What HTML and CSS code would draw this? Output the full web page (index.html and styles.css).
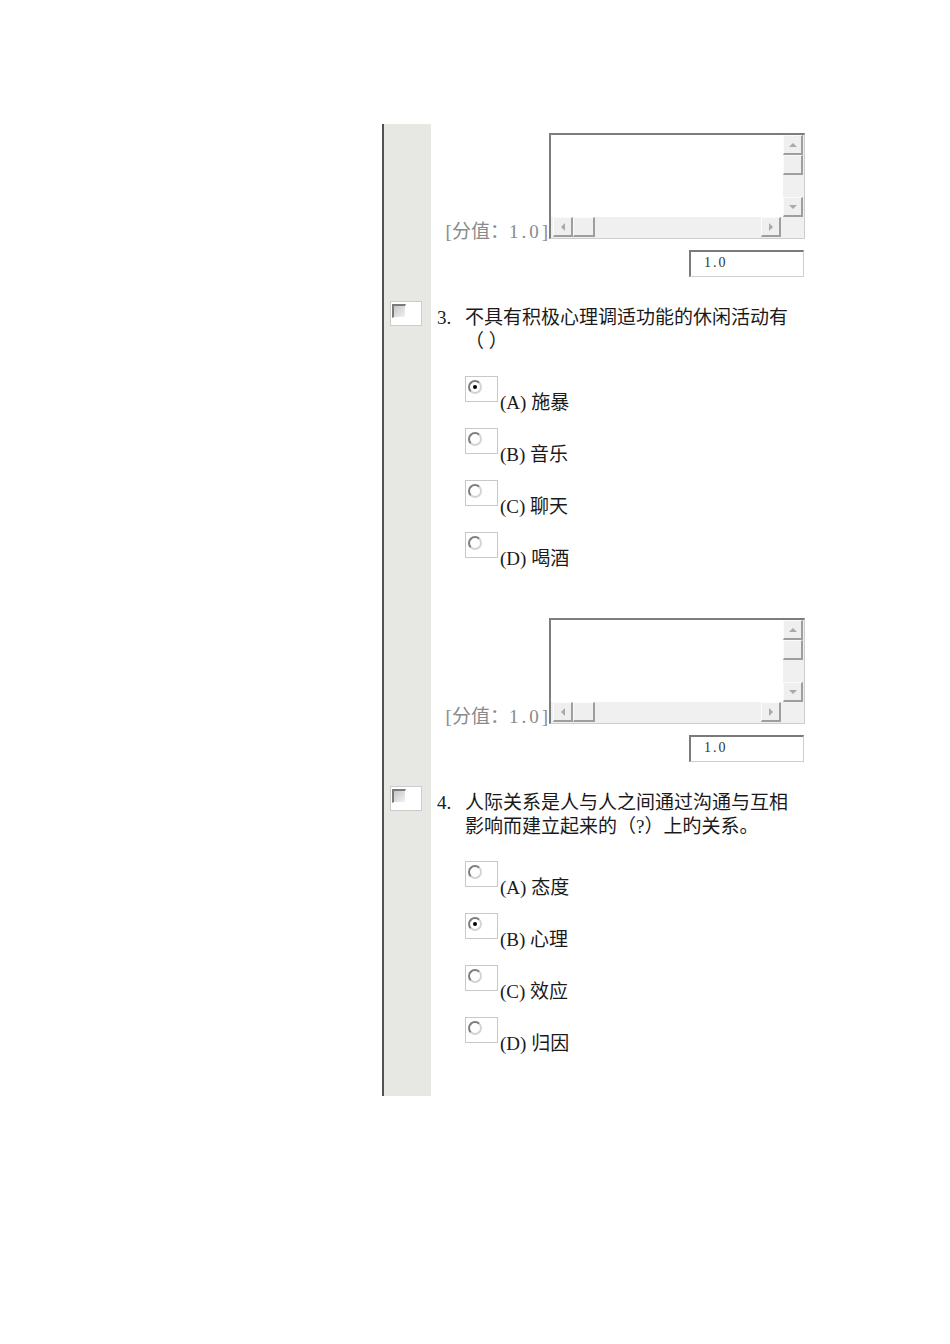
FILE: index.html
```html
<!DOCTYPE html>
<html lang="zh-CN">
<head>
<meta charset="utf-8">
<title>测验</title>
<link rel="stylesheet" href="styles.css">
</head>
<body>
<div class="sheet">

  <div class="row score">
    <div class="side"></div>
    <div class="main">
      <div class="score-line">
        <span class="score-label">[分值：<span class="num">1.0</span>]</span>
        <div class="ta">
          <div class="ta-text"></div>
          <div class="vbar">
            <span class="btn"><span class="arr up"></span></span>
            <span class="btn"></span>
            <span class="track"></span>
            <span class="btn"><span class="arr down"></span></span>
          </div>
          <div class="hbar">
            <span class="btn"><span class="arr left"></span></span>
            <span class="btn wide"></span>
            <span class="track"></span>
            <span class="btn"><span class="arr right"></span></span>
          </div>
          <div class="corner"></div>
        </div>
      </div>
      <div class="input-line"><div class="field"><span class="num">1.0</span></div></div>
    </div>
  </div>

  <div class="row q">
    <div class="side"><span class="check"><span class="check-in"></span></span></div>
    <div class="main">
      <div class="qtext"><span class="qnum">3.</span><span class="qbody">不具有积极心理调适功能的休闲活动有（ ）</span></div>
      <div class="opts">
        <div class="opt"><span class="radio"><span class="radio-in on"></span></span><span class="olabel">(A) 施暴</span></div>
        <div class="opt"><span class="radio"><span class="radio-in"></span></span><span class="olabel">(B) 音乐</span></div>
        <div class="opt"><span class="radio"><span class="radio-in"></span></span><span class="olabel">(C) 聊天</span></div>
        <div class="opt"><span class="radio"><span class="radio-in"></span></span><span class="olabel">(D) 喝酒</span></div>
      </div>
    </div>
  </div>

  <div class="row score">
    <div class="side"></div>
    <div class="main">
      <div class="score-line">
        <span class="score-label">[分值：<span class="num">1.0</span>]</span>
        <div class="ta">
          <div class="ta-text"></div>
          <div class="vbar">
            <span class="btn"><span class="arr up"></span></span>
            <span class="btn"></span>
            <span class="track"></span>
            <span class="btn"><span class="arr down"></span></span>
          </div>
          <div class="hbar">
            <span class="btn"><span class="arr left"></span></span>
            <span class="btn wide"></span>
            <span class="track"></span>
            <span class="btn"><span class="arr right"></span></span>
          </div>
          <div class="corner"></div>
        </div>
      </div>
      <div class="input-line"><div class="field"><span class="num">1.0</span></div></div>
    </div>
  </div>

  <div class="row q last">
    <div class="side"><span class="check"><span class="check-in"></span></span></div>
    <div class="main">
      <div class="qtext"><span class="qnum">4.</span><span class="qbody">人际关系是人与人之间通过沟通与互相影响而建立起来的（?）上旳关系。</span></div>
      <div class="opts">
        <div class="opt"><span class="radio"><span class="radio-in"></span></span><span class="olabel">(A) 态度</span></div>
        <div class="opt"><span class="radio"><span class="radio-in on"></span></span><span class="olabel">(B) 心理</span></div>
        <div class="opt"><span class="radio"><span class="radio-in"></span></span><span class="olabel">(C) 效应</span></div>
        <div class="opt"><span class="radio"><span class="radio-in"></span></span><span class="olabel">(D) 归因</span></div>
      </div>
    </div>
  </div>

</div>
</body>
</html>
```

FILE: styles.css
```css
* { box-sizing: border-box; }
html, body { margin: 0; padding: 0; background: #ffffff; }
body {
  font-family: "Liberation Serif", "Noto Sans CJK SC", serif;
  font-size: 19px;
  color: #1a1a1a;
}

.sheet {
  margin: 124px 0 0 382px;
  width: 423px;
  border-left: 2px solid #525252;
}
.row { display: flex; }
.side { width: 47px; flex: none; background: #e7e8e3; }
.main { width: 374px; flex: none; }

/* score block */
.score .main { padding-top: 9px; }
.score-line { display: flex; justify-content: flex-end; align-items: flex-end; }
.score-label {
  color: #8a8a8a;
  line-height: 20px;
  margin: 0 1px -3px 0;
  white-space: nowrap;
}
.num { letter-spacing: 3px; }

.ta {
  width: 256px;
  height: 106px;
  flex: none;
  border-style: solid;
  border-width: 2px 1px 1px 2px;
  border-color: #7d7d7d #cdcdcd #cdcdcd #7d7d7d;
  background: #ffffff;
  display: grid;
  grid-template-columns: 1fr 21px;
  grid-template-rows: 1fr 21px;
}
.ta-text { background: #ffffff; }
.vbar { background: #f0f0f0; display: flex; flex-direction: column; }
.hbar { background: #f0f0f0; display: flex; padding: 0 2px; }
.corner { background: #f0f0f0; }
.track { flex: 1; }
.btn {
  width: 20px;
  height: 20px;
  flex: none;
  background: #efefef;
  border-style: solid;
  border-width: 1px 2px 2px 1px;
  border-color: #fbfbfb #9e9e9e #9e9e9e #fbfbfb;
  display: flex;
  align-items: center;
  justify-content: center;
}
.btn.wide { width: 22px; }
.arr { width: 0; height: 0; }
.arr.up { border-left: 4px solid transparent; border-right: 4px solid transparent; border-bottom: 4px solid #a9a9a9; }
.arr.down { border-left: 4px solid transparent; border-right: 4px solid transparent; border-top: 4px solid #a9a9a9; }
.arr.left { border-top: 4px solid transparent; border-bottom: 4px solid transparent; border-right: 4px solid #a9a9a9; }
.arr.right { border-top: 4px solid transparent; border-bottom: 4px solid transparent; border-left: 4px solid #a9a9a9; }

.input-line { display: flex; justify-content: flex-end; margin-top: 11px; }
.field {
  width: 115px;
  height: 27px;
  margin-right: 1px;
  border-style: solid;
  border-width: 2px 1px 1px 2px;
  border-color: #7b7b7b #cfcfcf #cfcfcf #7b7b7b;
  background: #ffffff;
  font-size: 14px;
  line-height: 22px;
  padding-left: 13px;
  color: #333333;
}
.field .num { letter-spacing: 2px; }

/* question block */
.q .side { padding: 24px 0 0 6px; }
.check {
  display: block;
  width: 32px;
  height: 25px;
  border: 1px solid #cbcbcb;
  background: #ffffff;
  padding: 2px 0 0 1px;
}
.check-in {
  display: block;
  width: 14px;
  height: 14px;
  border-style: solid;
  border-width: 2px 1px 1px 2px;
  border-color: #7a7a7a #ffffff #ffffff #7a7a7a;
  background: linear-gradient(135deg, #c6c6c6, #f2f2f2);
}
.q .main { padding: 29px 0 39px 6px; }
.q.last .main { padding-bottom: 41px; }
.qtext { display: flex; line-height: 24px; }
.qnum { width: 28px; flex: none; }
.qbody { width: 340px; }
.opts { margin: 22px 0 0 28px; }
.opt { display: flex; align-items: flex-start; height: 52px; }
.opt:last-child { height: 38px; }
.radio {
  width: 33px;
  height: 26px;
  flex: none;
  border: 1px solid #c8c8c8;
  background: #ffffff;
  padding: 3px 0 0 2px;
}
.radio-in {
  display: block;
  position: relative;
  width: 14px;
  height: 14px;
  border-radius: 50%;
  border: 2px solid;
  border-color: #7e7e7e #d4d4d4 #d4d4d4 #7e7e7e;
  background: #ffffff;
}
.radio-in.on::after {
  content: "";
  position: absolute;
  left: 3px;
  top: 3px;
  width: 4px;
  height: 4px;
  border-radius: 50%;
  background: #000000;
}
.olabel { margin: 17px 0 0 2px; line-height: 20px; white-space: nowrap; }
```
